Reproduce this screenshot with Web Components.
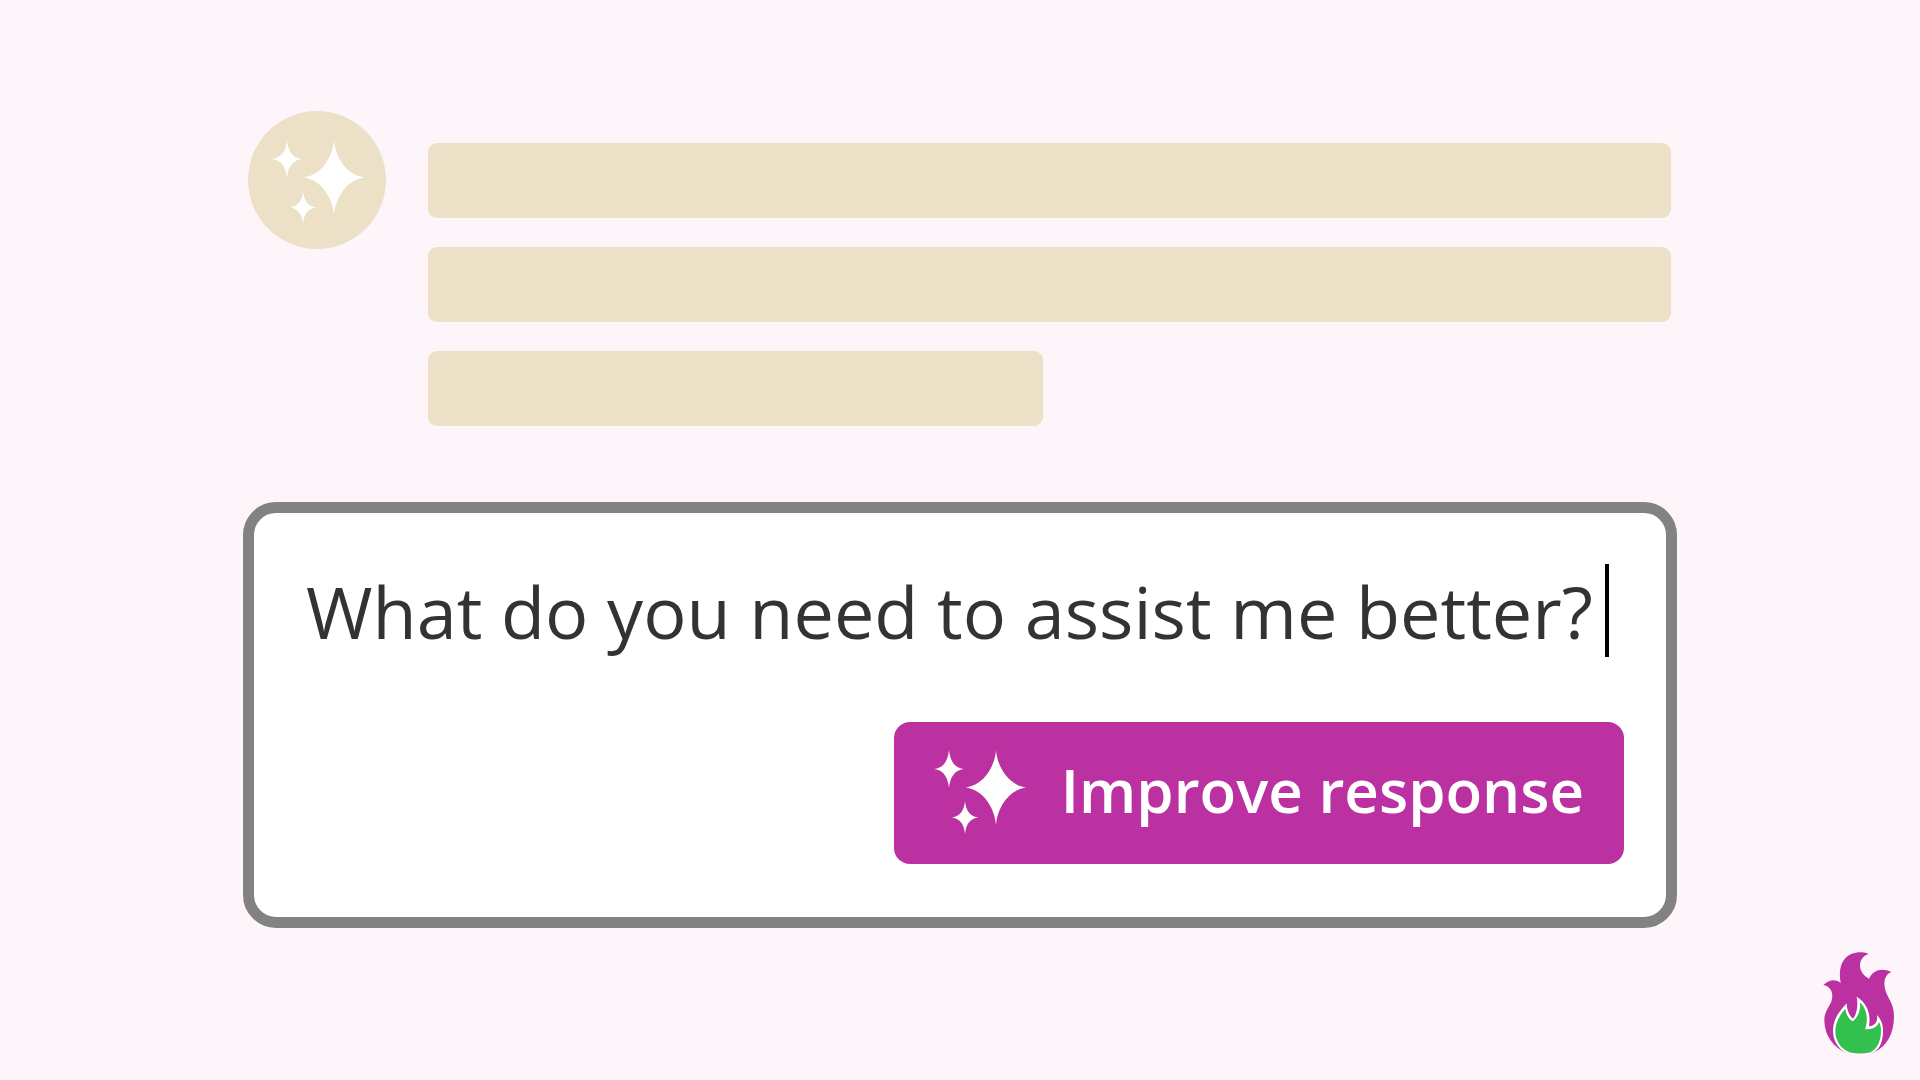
<!DOCTYPE html>
<html lang="en">
<head>
<meta charset="UTF-8">
<meta name="viewport" content="width=device-width, initial-scale=1.0">
<title>Improve response</title>
<style>
body{
  margin:0;
  min-height:100vh;
  background-color:#fef5fb;
  font-family:"Open Sans", "Noto Sans", sans-serif;
  color:#333;
}
</style>
</head>
<body>
<chat-page>
  <chat-response></chat-response>
  <chat-prompt value="What do you need to assist me better?">Improve response</chat-prompt>
  <flame-logo slot="logo"></flame-logo>
</chat-page>

<script>
window.customElements.define('sparkles-icon', class extends HTMLElement {
  constructor(){ super(); this.attachShadow({mode:'open'}); }

  connectedCallback(){
    this.shadowRoot.innerHTML =
      `
    <style>
:host{ display:block; flex:none; width:94px; height:88px; }
svg{ display:block; width:100%; height:100%; fill:#fff; }
    </style>
    <svg viewBox="-2 -4 94 88" aria-hidden="true">
      <path d="M15 0C16 10 20 18 30 19C20 20 16 28 15 38C14 28 10 20 0 19C10 18 14 10 15 0Z"/>
      <path d="M62 0C63 16 74 35 92 37.5C74 40 63 59 62 75C61 59 50 40 32 37.5C50 35 61 16 62 0Z"/>
      <path d="M31 51C32 60 35 66 44 67.5C35 69 32 75 31 84C30 75 27 69 18 67.5C27 66 30 60 31 51Z"/>
    </svg>
    `;
  }
})

window.customElements.define('flame-logo', class extends HTMLElement {
  constructor(){ super(); this.attachShadow({mode:'open'}); }

  connectedCallback(){
    this.shadowRoot.innerHTML =
      `
    <style>
:host{ display:block; width:72px; height:102px; }
svg{ display:block; width:100%; height:100%; }
    </style>
    <svg viewBox="68 67 216 306" role="img" aria-label="Flame">
      <path fill="#bc31a1" d="M138 370C100 354 73 318 72 274C71 240 96 227 96 199C96 182 86 169 69 166C86 149 108 147 121 160C111 105 133 66 185 68Q197 69 205 73C171 83 169 128 206 147C218 121 245 113 273 127C255 134 249 154 254 177C260 205 281 218 281 259C281 312 260 350 221 368Z"/>
      <path fill="#fff" d="M138 370C111 356 98 330 98 303C99 265 120 242 139 221C140 243 147 258 158 267C169 253 174 229 169 201C195 216 214 249 206 290C224 289 233 276 230 256C244 271 249 288 248 308C247 336 240 356 221 368Z"/>
      <path fill="#34c04e" d="M148 368C120 358 105 331 105 305C105 277 120 254 135 237C137 254 145 268 158 275C175 259 181 241 179 218C200 239 205 266 194 299C215 299 231 293 236 277C243 289 243 304 241 319C237 343 226 362 208 368Q178 375 148 368Z"/>
    </svg>
    `;
  }
})

window.customElements.define('chat-response', class extends HTMLElement {
  constructor(){ super(); this.attachShadow({mode:'open'}); }

  connectedCallback(){
    this.shadowRoot.innerHTML =
      `
    <style>
:host{
  --cl-skeleton:#ece1c6;
  display:flex;
  align-items:flex-start;
  gap:42px;
  padding:0 6px 0 5px;
}
.avatar{
  flex:none;
  display:grid;
  place-content:center;
  width:138px;
  height:138px;
  border-radius:50%;
  background:var(--cl-skeleton);
}
.lines{
  flex:1;
  display:grid;
  gap:29px;
  padding-top:32px;
}
.line{
  height:75px;
  border-radius:9px;
  background:var(--cl-skeleton);
}
.line:last-child{ width:49.5%; }
    </style>
    <div class="avatar"><sparkles-icon></sparkles-icon></div>
    <div class="lines">
      <div class="line"></div>
      <div class="line"></div>
      <div class="line"></div>
    </div>
    `;
  }
})

window.customElements.define('chat-prompt', class extends HTMLElement {
  constructor(){ super(); this.attachShadow({mode:'open'}); }

  connectedCallback(){
    this.shadowRoot.innerHTML =
      `
    <style>
*{ box-sizing:border-box; }

:host{
  box-sizing:border-box;
  display:grid;
  gap:65px;
  padding:51px 42px 53px 52px;
  border:11px solid #828282;
  border-radius:33px;
  background:#fff;
}
.field{
  display:flex;
  align-items:center;
  padding-right:15px;
}
input{
  flex:1;
  min-width:0;
  height:93px;
  padding:0;
  border:none;
  outline:none;
  background:none;
  font:inherit;
  font-size:72px;
  color:inherit;
}
.caret{
  width:4px;
  height:93px;
  background:#000;
}
button{
  justify-self:end;
  display:flex;
  align-items:center;
  gap:35px;
  height:142px;
  padding:0 40px 6px 38px;
  border:none;
  border-radius:16px;
  background:#bc31a1;
  color:#fff;
  font:inherit;
  font-size:60px;
  font-weight:600;
}
    </style>
    <div class="field">
      <input type="text" aria-label="Message" value="${this.getAttribute('value')}">
      <span class="caret"></span>
    </div>
    <button type="button"><sparkles-icon></sparkles-icon><slot></slot></button>
    `;
  }
})

window.customElements.define('chat-page', class extends HTMLElement {
  constructor(){ super(); this.attachShadow({mode:'open'}); }

  connectedCallback(){
    this.shadowRoot.innerHTML =
      `
    <style>
:host{ display:block; }
main{
  display:grid;
  gap:76px;
  padding:111px 243px 0;
}
slot[name="logo"]::slotted(*){
  position:fixed;
  right:25px;
  bottom:26px;
}
    </style>
    <main><slot></slot></main>
    <slot name="logo"></slot>
    `;
  }
})
</script>
</body>
</html>
